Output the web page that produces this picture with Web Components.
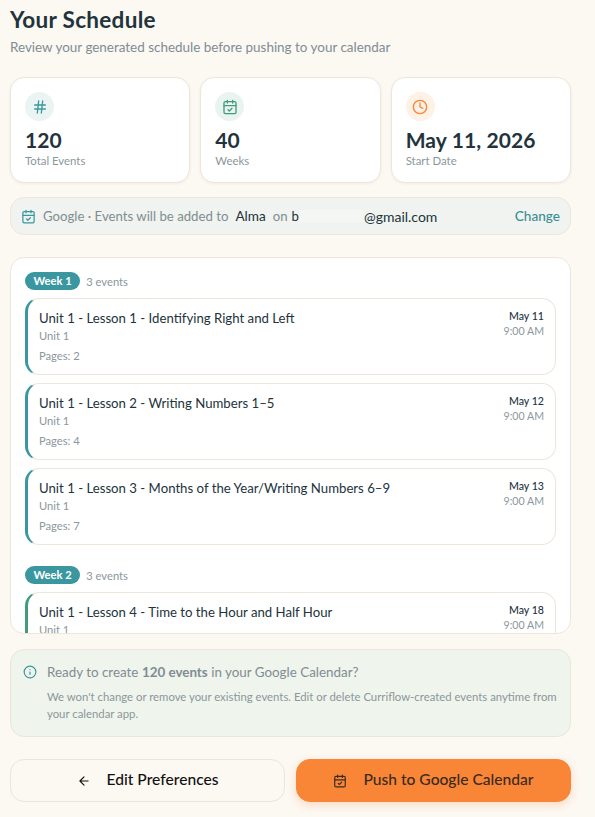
<!DOCTYPE html>
<html lang="en">
<head>
<meta charset="utf-8">
<title>Your Schedule</title>
<style>
  html, body { margin: 0; height: 100%; }
  body {
    background: #fcf8f2;
    color: #22333b;
    font-family: Lato, "Open Sans", sans-serif;
    overflow: hidden;
  }
  schedule-page { height: 817px; }
</style>
</head>
<body>

<schedule-page>
  <stat-card slot="stats" icon="hash" tone="teal" value="120" label="Total Events"></stat-card>
  <stat-card slot="stats" icon="calendar" tone="green" value="40" label="Weeks"></stat-card>
  <stat-card slot="stats" icon="clock" tone="orange" value="May 11, 2026" label="Start Date"></stat-card>

  <calendar-bar slot="bar"></calendar-bar>

  <week-group slot="weeks" name="Week 1" count="3 events">
    <event-card title="Unit 1 - Lesson 1 - Identifying Right and Left" unit="Unit 1" pages="Pages: 2" date="May 11" time="9:00 AM"></event-card>
    <event-card title="Unit 1 - Lesson 2 - Writing Numbers 1–5" unit="Unit 1" pages="Pages: 4" date="May 12" time="9:00 AM"></event-card>
    <event-card title="Unit 1 - Lesson 3 - Months of the Year/Writing Numbers 6–9" unit="Unit 1" pages="Pages: 7" date="May 13" time="9:00 AM"></event-card>
  </week-group>
  <week-group slot="weeks" name="Week 2" count="3 events" accent="#429c7c">
    <event-card title="Unit 1 - Lesson 4 - Time to the Hour and Half Hour" unit="Unit 1" date="May 18" time="9:00 AM"></event-card>
  </week-group>

  <info-note slot="note">
    <span slot="lead">Ready to create <b>120 events</b> in your Google Calendar?</span>
    We won't change or remove your existing events. Edit or delete Curriflow-created events anytime from your calendar app.
  </info-note>

  <action-button slot="actions" icon="arrow">Edit Preferences</action-button>
  <action-button slot="actions" icon="calendar" primary>Push to Google Calendar</action-button>
</schedule-page>

<script>
const ICONS = {
  hash: '<path d="M4 9h16M4 15h16M10 3 8 21M16 3l-2 18"/>',
  calendar: '<path d="M8 2v4M16 2v4"/><rect x="3" y="4" width="18" height="18" rx="2"/><path d="M3 10h18M9 16l2 2 4-4"/>',
  clock: '<circle cx="12" cy="12" r="10"/><path d="M12 6v6l4 2"/>',
  info: '<circle cx="12" cy="12" r="10"/><path d="M12 16v-4M12 8h.01"/>',
  arrow: '<path d="m12 19-7-7 7-7M19 12H5"/>'
};

function icon(name, size) {
  return `<svg xmlns="http://www.w3.org/2000/svg" width="${size}" height="${size}" viewBox="0 0 24 24" fill="none" stroke="currentColor" stroke-width="2" stroke-linecap="round" stroke-linejoin="round">${ICONS[name]}</svg>`;
}

class SchedulePage extends HTMLElement {
  constructor() {
    super();
    this.attachShadow({ mode: "open" }).innerHTML = `
      <style>
        :host { display: flex; flex-direction: column; padding: 0 24px 0 10px; box-sizing: border-box; }
        h1 { margin: 0; padding-top: 7px; font-size: 22.5px; line-height: 26px; font-weight: 700; color: #22333b; letter-spacing: .3px; }
        p { margin: 6px 0 0; font-size: 13.45px; line-height: 16px; color: #808d92; }
        .stats { display: flex; gap: 10px; margin-top: 22px; }
        .bar { margin-top: 14px; }
        .panel {
          margin-top: 22px; height: 377px; box-sizing: border-box; overflow: hidden;
          background: #fff; border: 1px solid #eee6da; border-radius: 14px;
          padding: 14px 14px 0;
          display: flex; flex-direction: column; gap: 21px;
        }
        .note { margin-top: 15px; }
        .actions { display: flex; gap: 11px; margin-top: 22px; }
      </style>
      <h1>Your Schedule</h1>
      <p>Review your generated schedule before pushing to your calendar</p>
      <div class="stats"><slot name="stats"></slot></div>
      <div class="bar"><slot name="bar"></slot></div>
      <div class="panel"><slot name="weeks"></slot></div>
      <div class="note"><slot name="note"></slot></div>
      <div class="actions"><slot name="actions"></slot></div>
    `;
  }
}

const TONES = {
  teal: ["#e9f4f3", "#3a979f"],
  green: ["#e9f4f0", "#429c7c"],
  orange: ["#fef1e6", "#f98536"]
};

class StatCard extends HTMLElement {
  connectedCallback() {
    const [bg, fg] = TONES[this.getAttribute("tone")];
    this.attachShadow({ mode: "open" }).innerHTML = `
      <style>
        :host {
          display: block; flex: 1 1 0; min-width: 0; height: 106px; box-sizing: border-box;
          background: #fff; border: 1px solid #eee6da; border-radius: 14px;
          padding: 14px 14px 0; box-shadow: 0 1px 3px rgba(80,60,30,.06);
        }
        .dot { width: 29px; height: 29px; border-radius: 50%; background: ${bg}; color: ${fg}; display: flex; align-items: center; justify-content: center; }
        .value { margin-top: 5px; font-size: 21px; line-height: 28px; font-weight: 700; color: #22333b; white-space: nowrap; letter-spacing: .1px; }
        .label { font-size: 11.4px; line-height: 14px; color: #8b979b; }
      </style>
      <div class="dot">${icon(this.getAttribute("icon"), 16)}</div>
      <div class="value">${this.getAttribute("value")}</div>
      <div class="label">${this.getAttribute("label")}</div>
    `;
  }
}

class CalendarBar extends HTMLElement {
  constructor() {
    super();
    this.attachShadow({ mode: "open" }).innerHTML = `
      <style>
        :host {
          display: flex; align-items: center; height: 38px; box-sizing: border-box;
          background: #f0f3ef; border: 1px solid #eee6da; border-radius: 14px;
          padding: 0 10px; font-size: 13.2px; color: #808d92; white-space: nowrap;
        }
        svg { color: #3a979f; margin-right: 7px; flex: none; }
        .who { color: #22333b; margin: 0 7px; font-size: 13.6px; }
        .mail { color: #22333b; font-size: 14px; }
        .hidden { display: inline-block; width: 65px; height: 12px; vertical-align: middle; background: #f4f6f3; }
        .b { margin-left: 4px; color: #22333b; }
        a { margin-left: auto; color: #3a8f97; font-size: 13.6px; font-weight: 500; }
      </style>
      ${icon("calendar", 15)}
      <span>Google · Events will be added to</span>
      <span class="who">Alma</span>
      <span>on</span><span class="b">b</span><span class="hidden"></span><span class="mail">@gmail.com</span>
      <a>Change</a>
    `;
  }
}

class WeekGroup extends HTMLElement {
  connectedCallback() {
    if (this.getAttribute("accent")) this.style.setProperty("--accent", this.getAttribute("accent"));
    this.attachShadow({ mode: "open" }).innerHTML = `
      <style>
        :host { display: block; flex: none; }
        .head { display: flex; align-items: center; gap: 6px; height: 18px; margin-bottom: 8px; }
        .pill { background: #3a979f; color: #fff; font-size: 11.2px; font-weight: 700; line-height: 18px; padding: 0 8.5px; border-radius: 9px; }
        .count { font-size: 11.2px; color: #8b979b; }
        .list { display: flex; flex-direction: column; gap: 8px; }
      </style>
      <div class="head"><span class="pill">${this.getAttribute("name")}</span><span class="count">${this.getAttribute("count")}</span></div>
      <div class="list"><slot></slot></div>
    `;
  }
}

class EventCard extends HTMLElement {
  connectedCallback() {
    const pages = this.getAttribute("pages");
    this.attachShadow({ mode: "open" }).innerHTML = `
      <style>
        :host {
          display: flex; justify-content: space-between; min-height: 77px; box-sizing: border-box;
          background: #fff; border: 1px solid #eee6da; border-left: 3px solid var(--accent, #3a979f);
          border-radius: 14px; padding: 10px 11px 0 11px;
        }
        .title { font-size: 13.2px; line-height: 18px; font-weight: 400; color: #22333b; }
        .sub { font-size: 11.2px; line-height: 14px; color: #8b979b; margin-top: 2px; }
        .pages { margin-top: 6px; }
        .when { text-align: right; flex: none; }
        .date { font-size: 10.6px; line-height: 14px; font-weight: 500; color: #22333b; }
        .time { font-size: 10.6px; line-height: 14px; color: #8b979b; margin-top: 1px; }
      </style>
      <div>
        <div class="title">${this.getAttribute("title")}</div>
        <div class="sub">${this.getAttribute("unit")}</div>
        ${pages ? `<div class="sub pages">${pages}</div>` : ""}
      </div>
      <div class="when">
        <div class="date">${this.getAttribute("date")}</div>
        <div class="time">${this.getAttribute("time")}</div>
      </div>
    `;
  }
}

class InfoNote extends HTMLElement {
  constructor() {
    super();
    this.attachShadow({ mode: "open" }).innerHTML = `
      <style>
        :host {
          display: block; height: 88px; box-sizing: border-box;
          background: #eff4ed; border: 1px solid #e9e6dc; border-radius: 14px;
          padding: 13px 12px 0 12px;
        }
        .lead { display: flex; align-items: center; gap: 10px; font-size: 13.4px; line-height: 18px; color: #808d92; }
        svg { color: #3a979f; flex: none; }
        .body { margin: 7px 0 0 24px; font-size: 11.35px; line-height: 17px; color: #8b979b; }
      </style>
      <div class="lead">${icon("info", 14)}<slot name="lead"></slot></div>
      <div class="body"><slot></slot></div>
    `;
  }
}

class ActionButton extends HTMLElement {
  connectedCallback() {
    const primary = this.hasAttribute("primary");
    this.attachShadow({ mode: "open" }).innerHTML = `
      <style>
        :host {
          display: flex; flex: 1 1 0; align-items: center; justify-content: center; gap: 16px;
          height: 43px; box-sizing: border-box; border-radius: 14px;
          font-size: 15.6px; font-weight: 500; white-space: nowrap;
          border: 1px solid ${primary ? "#f98536" : "#e9e6dc"};
          ${primary
            ? "background: #f98536; color: #3a2b22; box-shadow: 0 3px 8px rgba(249,133,54,.25);"
            : "background: transparent; color: #111;"}
        }
        span { padding-bottom: 3px; }
      </style>
      ${icon(this.getAttribute("icon"), 14)}
      <span><slot></slot></span>
    `;
  }
}

customElements.define("schedule-page", SchedulePage);
customElements.define("stat-card", StatCard);
customElements.define("calendar-bar", CalendarBar);
customElements.define("week-group", WeekGroup);
customElements.define("event-card", EventCard);
customElements.define("info-note", InfoNote);
customElements.define("action-button", ActionButton);
</script>
</body>
</html>
